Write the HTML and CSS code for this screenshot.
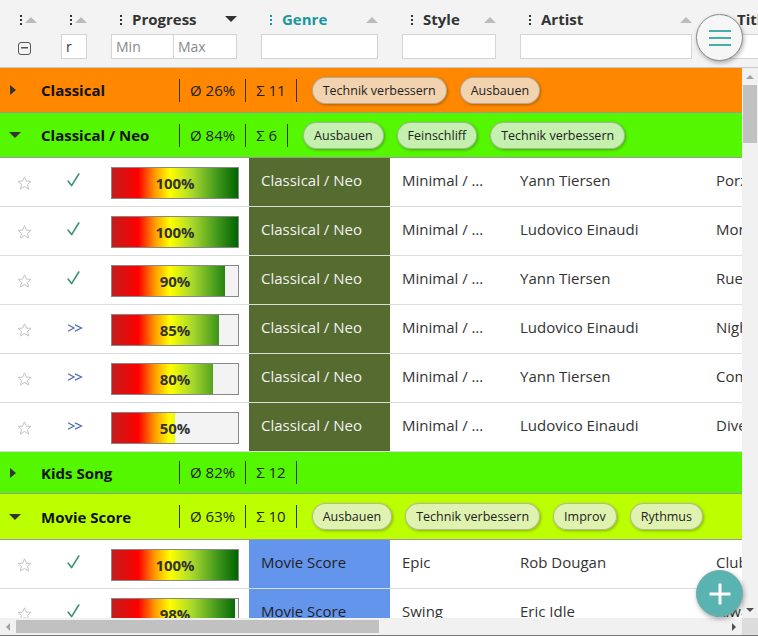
FILE: index.html
```html
<!DOCTYPE html>
<html lang="de">
<head>
<meta charset="utf-8">
<title>Repertoire</title>
<link rel="stylesheet" href="styles.css">
</head>
<body>
<div class="table">
  <div class="header">
    <div class="hrow">
      <div class="hcol w1 narrow">
        <div class="htitle"><span class="dots"></span><span class="sorter"></span></div>
        <div class="hfilter"><span class="collapse-icon"></span></div>
      </div>
      <div class="hcol w2 narrow">
        <div class="htitle"><span class="dots"></span><span class="sorter"></span></div>
        <div class="hfilter"><input class="finput" type="text" value="r"></div>
      </div>
      <div class="hcol w3">
        <div class="htitle"><span class="dots"></span><span class="hname">Progress</span><span class="sorter desc"></span></div>
        <div class="hfilter"><input class="finput half" type="text" placeholder="Min"><input class="finput half" type="text" placeholder="Max"></div>
      </div>
      <div class="hcol w4 active">
        <div class="htitle"><span class="dots"></span><span class="hname">Genre</span><span class="sorter"></span></div>
        <div class="hfilter"><input class="finput" type="text"></div>
      </div>
      <div class="hcol w5">
        <div class="htitle"><span class="dots"></span><span class="hname">Style</span><span class="sorter"></span></div>
        <div class="hfilter"><input class="finput" type="text"></div>
      </div>
      <div class="hcol w6">
        <div class="htitle"><span class="dots"></span><span class="hname">Artist</span><span class="sorter"></span></div>
        <div class="hfilter"><input class="finput" type="text"></div>
      </div>
      <div class="hcol w7">
        <div class="htitle"><span class="dots"></span><span class="hname">Title</span><span class="sorter"></span></div>
        <div class="hfilter"><input class="finput" type="text"></div>
      </div>
      <div class="hcol w8">
        <div class="htitle"><span class="dots"></span><span class="hname">Notes</span><span class="sorter"></span></div>
        <div class="hfilter"><input class="finput" type="text"></div>
      </div>
      <div class="hcol w9">
        <div class="htitle"><span class="dots"></span><span class="hname">Added</span><span class="sorter"></span></div>
        <div class="hfilter"><input class="finput" type="text"></div>
      </div>
    </div>
  </div>

  <div class="body-area">
    <div class="viewport">
      <div class="content">
        <div class="group g-orange">
          <span class="garrow right"></span>
          <span class="gtitle">Classical</span>
          <span class="gstat">Ø 26%</span>
          <span class="gstat last">Σ 11</span>
          <span class="tags"><span class="tag">Technik verbessern</span><span class="tag">Ausbauen</span></span>
        </div>

        <div class="group g-green">
          <span class="garrow down"></span>
          <span class="gtitle">Classical / Neo</span>
          <span class="gstat">Ø 84%</span>
          <span class="gstat last">Σ 6</span>
          <span class="tags"><span class="tag">Ausbauen</span><span class="tag">Feinschliff</span><span class="tag">Technik verbessern</span></span>
        </div>

        <div class="row">
          <div class="cell w1"><svg class="star" width="15" height="14" viewBox="0 0 15 14"><polygon points="7.5,0.8 9.4,5.1 14,5.4 10.5,8.4 11.6,13 7.5,10.5 3.4,13 4.5,8.4 1,5.4 5.6,5.1"/></svg></div>
          <div class="cell w2"><svg class="check" width="13" height="14" viewBox="0 0 13 14"><path d="M1.2 8.2 L4.6 12.6 L11.8 1"/></svg></div>
          <div class="cell w3 pcell"><div class="pbar" style="--p:100%">100%</div></div>
          <div class="cell w4 genre neo">Classical / Neo</div>
          <div class="cell w5">Minimal / Modern</div>
          <div class="cell w6">Yann Tiersen</div>
          <div class="cell w7">Porz Goret</div>
          <div class="cell w8"></div>
          <div class="cell w9"></div>
        </div>
        <div class="row">
          <div class="cell w1"><svg class="star" width="15" height="14" viewBox="0 0 15 14"><polygon points="7.5,0.8 9.4,5.1 14,5.4 10.5,8.4 11.6,13 7.5,10.5 3.4,13 4.5,8.4 1,5.4 5.6,5.1"/></svg></div>
          <div class="cell w2"><svg class="check" width="13" height="14" viewBox="0 0 13 14"><path d="M1.2 8.2 L4.6 12.6 L11.8 1"/></svg></div>
          <div class="cell w3 pcell"><div class="pbar" style="--p:100%">100%</div></div>
          <div class="cell w4 genre neo">Classical / Neo</div>
          <div class="cell w5">Minimal / Modern</div>
          <div class="cell w6">Ludovico Einaudi</div>
          <div class="cell w7">Monday</div>
          <div class="cell w8"></div>
          <div class="cell w9"></div>
        </div>
        <div class="row">
          <div class="cell w1"><svg class="star" width="15" height="14" viewBox="0 0 15 14"><polygon points="7.5,0.8 9.4,5.1 14,5.4 10.5,8.4 11.6,13 7.5,10.5 3.4,13 4.5,8.4 1,5.4 5.6,5.1"/></svg></div>
          <div class="cell w2"><svg class="check" width="13" height="14" viewBox="0 0 13 14"><path d="M1.2 8.2 L4.6 12.6 L11.8 1"/></svg></div>
          <div class="cell w3 pcell"><div class="pbar" style="--p:90%">90%</div></div>
          <div class="cell w4 genre neo">Classical / Neo</div>
          <div class="cell w5">Minimal / Modern</div>
          <div class="cell w6">Yann Tiersen</div>
          <div class="cell w7">Rue des Cascades</div>
          <div class="cell w8"></div>
          <div class="cell w9"></div>
        </div>
        <div class="row">
          <div class="cell w1"><svg class="star" width="15" height="14" viewBox="0 0 15 14"><polygon points="7.5,0.8 9.4,5.1 14,5.4 10.5,8.4 11.6,13 7.5,10.5 3.4,13 4.5,8.4 1,5.4 5.6,5.1"/></svg></div>
          <div class="cell w2"><svg class="ff" width="16" height="8" viewBox="0 0 16 8"><path d="M1 0.8 L7 4 L1 7.2 M8 0.8 L14.5 4 L8 7.2"/></svg></div>
          <div class="cell w3 pcell"><div class="pbar" style="--p:85%">85%</div></div>
          <div class="cell w4 genre neo">Classical / Neo</div>
          <div class="cell w5">Minimal / Modern</div>
          <div class="cell w6">Ludovico Einaudi</div>
          <div class="cell w7">Nightbook</div>
          <div class="cell w8"></div>
          <div class="cell w9"></div>
        </div>
        <div class="row">
          <div class="cell w1"><svg class="star" width="15" height="14" viewBox="0 0 15 14"><polygon points="7.5,0.8 9.4,5.1 14,5.4 10.5,8.4 11.6,13 7.5,10.5 3.4,13 4.5,8.4 1,5.4 5.6,5.1"/></svg></div>
          <div class="cell w2"><svg class="ff" width="16" height="8" viewBox="0 0 16 8"><path d="M1 0.8 L7 4 L1 7.2 M8 0.8 L14.5 4 L8 7.2"/></svg></div>
          <div class="cell w3 pcell"><div class="pbar" style="--p:80%">80%</div></div>
          <div class="cell w4 genre neo">Classical / Neo</div>
          <div class="cell w5">Minimal / Modern</div>
          <div class="cell w6">Yann Tiersen</div>
          <div class="cell w7">Comptine d'un autre été</div>
          <div class="cell w8"></div>
          <div class="cell w9"></div>
        </div>
        <div class="row">
          <div class="cell w1"><svg class="star" width="15" height="14" viewBox="0 0 15 14"><polygon points="7.5,0.8 9.4,5.1 14,5.4 10.5,8.4 11.6,13 7.5,10.5 3.4,13 4.5,8.4 1,5.4 5.6,5.1"/></svg></div>
          <div class="cell w2"><svg class="ff" width="16" height="8" viewBox="0 0 16 8"><path d="M1 0.8 L7 4 L1 7.2 M8 0.8 L14.5 4 L8 7.2"/></svg></div>
          <div class="cell w3 pcell"><div class="pbar" style="--p:50%">50%</div></div>
          <div class="cell w4 genre neo">Classical / Neo</div>
          <div class="cell w5">Minimal / Modern</div>
          <div class="cell w6">Ludovico Einaudi</div>
          <div class="cell w7">Divenire</div>
          <div class="cell w8"></div>
          <div class="cell w9"></div>
        </div>

        <div class="group g-green short">
          <span class="garrow right"></span>
          <span class="gtitle">Kids Song</span>
          <span class="gstat">Ø 82%</span>
          <span class="gstat last">Σ 12</span>
        </div>

        <div class="group g-lime tall">
          <span class="garrow down"></span>
          <span class="gtitle">Movie Score</span>
          <span class="gstat">Ø 63%</span>
          <span class="gstat last">Σ 10</span>
          <span class="tags"><span class="tag">Ausbauen</span><span class="tag">Technik verbessern</span><span class="tag">Improv</span><span class="tag">Rythmus</span></span>
        </div>

        <div class="row">
          <div class="cell w1"><svg class="star" width="15" height="14" viewBox="0 0 15 14"><polygon points="7.5,0.8 9.4,5.1 14,5.4 10.5,8.4 11.6,13 7.5,10.5 3.4,13 4.5,8.4 1,5.4 5.6,5.1"/></svg></div>
          <div class="cell w2"><svg class="check" width="13" height="14" viewBox="0 0 13 14"><path d="M1.2 8.2 L4.6 12.6 L11.8 1"/></svg></div>
          <div class="cell w3 pcell"><div class="pbar" style="--p:100%">100%</div></div>
          <div class="cell w4 genre movie">Movie Score</div>
          <div class="cell w5">Epic</div>
          <div class="cell w6">Rob Dougan</div>
          <div class="cell w7">Clubbed to Death</div>
          <div class="cell w8"></div>
          <div class="cell w9"></div>
        </div>
        <div class="row">
          <div class="cell w1"><svg class="star" width="15" height="14" viewBox="0 0 15 14"><polygon points="7.5,0.8 9.4,5.1 14,5.4 10.5,8.4 11.6,13 7.5,10.5 3.4,13 4.5,8.4 1,5.4 5.6,5.1"/></svg></div>
          <div class="cell w2"><svg class="check" width="13" height="14" viewBox="0 0 13 14"><path d="M1.2 8.2 L4.6 12.6 L11.8 1"/></svg></div>
          <div class="cell w3 pcell"><div class="pbar" style="--p:98%">98%</div></div>
          <div class="cell w4 genre movie">Movie Score</div>
          <div class="cell w5">Swing</div>
          <div class="cell w6">Eric Idle</div>
          <div class="cell w7">Always Look on the Bright Side of Life</div>
          <div class="cell w8"></div>
          <div class="cell w9"></div>
        </div>
        <div class="more-rows"></div>
      </div>
    </div>

    <div class="vscroll">
      <span class="sb-btn up"></span>
      <div class="sb-track v"><div class="sb-thumb v"></div></div>
      <span class="sb-btn down"></span>
    </div>
    <div class="hscroll">
      <span class="sb-btn left"></span>
      <div class="sb-track h"><div class="sb-thumb h"></div></div>
      <span class="sb-btn rightb"></span>
    </div>
    <div class="sb-corner"></div>
  </div>

  <button class="fab-menu" type="button" aria-label="Menü">
    <svg width="24" height="18" viewBox="0 0 24 18"><path d="M1 2 H23 M1 9 H23 M1 16 H23"/></svg>
  </button>
  <button class="fab-add" type="button" aria-label="Hinzufügen">
    <svg width="24" height="24" viewBox="0 0 24 24"><path d="M12 1.5 V22.5 M1.5 12 H22.5"/></svg>
  </button>
</div>
</body>
</html>
```

FILE: styles.css
```css
* { box-sizing: border-box; }
html, body { margin: 0; padding: 0; }
body {
  font-family: "Open Sans", "Noto Sans", "DejaVu Sans", sans-serif;
  font-size: 15px;
  color: #333;
  background: #fff;
}

.table {
  position: relative;
  width: 758px;
  height: 636px;
  overflow: hidden;
  border-bottom: 1px solid #777;
  background: #fff;
}

/* widths */
.w1 { width: 49px; }
.w2 { width: 50px; }
.w3 { width: 150px; }
.w4 { width: 141px; }
.w5 { width: 118px; }
.w6 { width: 196px; }
.w7 { width: 250px; }
.w8 { width: 300px; }
.w9 { width: 198px; }

/* header */
.header {
  height: 68px;
  background: #f3f3f3;
  border-bottom: 1px solid #c8c8c8;
  overflow: hidden;
}
.hrow { display: flex; width: 1452px; }
.hcol { flex: none; padding: 9px 12px 0; }
.htitle {
  display: flex;
  align-items: center;
  height: 20px;
  font-weight: 700;
  color: #333;
  white-space: nowrap;
}
.dots {
  flex: none;
  width: 2px;
  height: 10px;
  margin: 1px 10px 0 9px;
  background: repeating-linear-gradient(to bottom, #333 0 2px, transparent 2px 4px);
}
.narrow .dots { margin-right: 3px; }
.w1 .dots { margin-left: 8px; }
.hname { flex: 1; overflow: hidden; }
.narrow .htitle { justify-content: space-between; }
.sorter {
  flex: none;
  width: 0;
  height: 0;
  border-left: 6px solid transparent;
  border-right: 6px solid transparent;
  border-bottom: 6px solid #bbb;
  margin-top: 1px;
}
.sorter.desc {
  border-bottom: 0;
  border-top: 6px solid #333;
  margin-top: 0;
}
.active .htitle { color: #1a969c; }
.active .dots { background: repeating-linear-gradient(to bottom, #1a969c 0 2px, transparent 2px 4px); }

.hfilter { display: flex; margin-top: 5px; height: 25px; align-items: center; }
.finput {
  width: 100%;
  height: 25px;
  border: 1px solid #d4d4d4;
  background: #fff;
  font-family: inherit;
  font-size: 14px;
  color: #333;
  padding: 0 4px;
  outline: none;
  margin: 0;
  min-width: 0;
}
.finput::placeholder { color: #888; }
.finput.half { width: 50%; }
.finput.half + .finput.half { margin-left: -1px; width: calc(50% + 1px); }
.collapse-icon {
  display: block;
  width: 13px;
  height: 13px;
  margin-left: 6px;
  margin-top: 3px;
  border: 1.5px solid #555;
  border-radius: 3px;
  background: linear-gradient(#555, #555) center / 7px 1.5px no-repeat;
}

/* body with scrollbars */
.body-area {
  display: grid;
  grid-template-columns: 742px 16px;
  grid-template-rows: 550px 17px;
}
.viewport {
  overflow: auto;
  scrollbar-width: none;
}
.viewport::-webkit-scrollbar { display: none; }
.content { width: 1452px; }
.more-rows { height: 4300px; }

.vscroll, .hscroll { display: flex; background: #f1f1f1; }
.vscroll { flex-direction: column; }
.sb-btn {
  flex: none;
  display: flex;
  align-items: center;
  justify-content: center;
}
.sb-btn::before { content: ""; width: 0; height: 0; }
.vscroll .sb-btn { height: 17px; }
.hscroll .sb-btn { width: 16px; }
.sb-btn.up::before {
  border-left: 4px solid transparent;
  border-right: 4px solid transparent;
  border-bottom: 4px solid #a3a3a3;
}
.sb-btn.down::before {
  border-left: 4px solid transparent;
  border-right: 4px solid transparent;
  border-top: 4px solid #505050;
}
.sb-btn.left::before {
  border-top: 4px solid transparent;
  border-bottom: 4px solid transparent;
  border-right: 4px solid #a3a3a3;
}
.sb-btn.rightb::before {
  border-top: 4px solid transparent;
  border-bottom: 4px solid transparent;
  border-left: 4px solid #505050;
}
.sb-track { flex: 1; display: flex; }
.sb-track.v { flex-direction: column; padding: 0 1px; }
.sb-track.h { padding: 2px 0; }
.sb-thumb { background: #c1c1c1; }
.sb-thumb.v { height: 58px; }
.sb-thumb.h { width: 363px; }
.sb-corner { background: #dcdcdc; }

/* groups */
.group {
  display: flex;
  align-items: center;
  height: 45px;
  border-bottom: 1px solid #9a9a9a;
  color: #222;
  white-space: nowrap;
}
.group.short { height: 42px; }
.group.tall { height: 46px; }
.g-orange { background: #ff8800; }
.g-green { background: #55f700; }
.g-lime { background: #bbff00; }

.garrow {
  flex: none;
  width: 41px;
  height: 12px;
}
.garrow::before {
  content: "";
  display: block;
  width: 0;
  height: 0;
}
.garrow.right::before {
  margin: 1px 0 0 10px;
  border-top: 5px solid transparent;
  border-bottom: 5px solid transparent;
  border-left: 6px solid #333;
}
.garrow.down::before {
  margin: 3px 0 0 9px;
  border-left: 6px solid transparent;
  border-right: 6px solid transparent;
  border-top: 6px solid #333;
}
.gtitle {
  flex: none;
  width: 138px;
  font-weight: 700;
  color: #111;
}
.gstat {
  flex: none;
  height: 23px;
  line-height: 23px;
  padding: 0 10px;
  border-left: 1px solid #333;
}
.gstat.last { border-right: 1px solid #333; }
.tags { display: flex; margin-left: 15px; gap: 13px; }
.tag {
  height: 27px;
  line-height: 25px;
  padding: 0 10px;
  border-radius: 14px;
  border: 1px solid rgba(120, 120, 120, 0.45);
  background: rgba(238, 238, 238, 0.74);
  box-shadow: 1px 1px 3px rgba(0, 0, 0, 0.3);
  font-size: 12.5px;
  color: #222;
}

/* rows */
.row {
  display: flex;
  height: 49px;
  border-bottom: 1px solid #dcdcdc;
}
.cell {
  flex: none;
  padding: 12px 12px 0;
  line-height: 20px;
  white-space: nowrap;
  overflow: hidden;
  text-overflow: ellipsis;
  color: #333;
}
.cell.w1 { padding: 18px 0 0 17px; }
.cell.w2 { padding: 15px 0 0 18px; }
.star { display: block; fill: none; stroke: #c4c4c4; stroke-width: 1; }
.check { display: block; fill: none; stroke: #3b9277; stroke-width: 1.6; stroke-linecap: round; stroke-linejoin: round; }
.ff { display: block; margin-top: 4px; fill: none; stroke: #4f6fae; stroke-width: 1.3; }
.pcell { padding: 9px 0 0 12px; overflow: visible; }
.pbar {
  width: 128px;
  height: 32px;
  border: 1px solid #888;
  text-align: center;
  line-height: 30px;
  font-weight: 700;
  color: #333;
  background:
    linear-gradient(to right, transparent var(--p), #f3f3f3 var(--p)),
    linear-gradient(to right, #c21d1d 0%, #ff0000 21%, #ff9a00 34%, #ffff00 46%, #a6d82c 64%, #3f961c 84%, #006400 100%);
}
.genre.neo { background: #556b2f; color: #f2f2f2; }
.genre.movie { background: #6495ed; color: #222; }

/* floating buttons */
.fab-menu, .fab-add {
  position: absolute;
  right: 15px;
  width: 47px;
  height: 47px;
  border-radius: 50%;
  padding: 0;
  display: flex;
  align-items: center;
  justify-content: center;
  cursor: pointer;
}
.fab-menu {
  top: 14px;
  background: #f6f6f6;
  border: 1px solid #8a8a8a;
  box-shadow: 1px 2px 4px rgba(0, 0, 0, 0.3);
}
.fab-menu svg { fill: none; stroke: #45aea8; stroke-width: 2; }
.fab-add {
  top: 570px;
  background: #58b3b1;
  border: 1px solid #7aa;
  box-shadow: 1px 2px 5px rgba(0, 0, 0, 0.35);
}
.fab-add svg { fill: none; stroke: #fff; stroke-width: 3; }
```
